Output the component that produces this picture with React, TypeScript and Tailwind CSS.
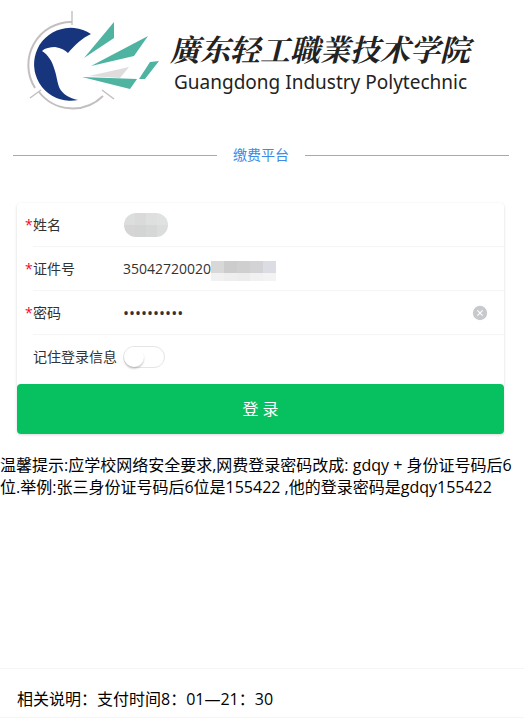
import { useState } from "react";

const cjk = "font-['Open_Sans','Noto_Sans_CJK_SC',sans-serif]";

function Emblem() {
  return (
    <svg viewBox="0 0 140 104" className="h-[104px] w-[140px] shrink-0" aria-hidden="true">
      <g fill="none" stroke="#c3bfbf" strokeWidth="2">
        <path d="M46 12A43 43 0 0 0 9 78" />
        <path d="M13 82A43 43 0 0 0 77 86" />
        <path d="M46 1V15M4 88L15 80M76 80L88 89" strokeWidth="1.4" />
      </g>
      <path
        fill="#17357d"
        d="M65 24A36.5 36.5 0 1 0 52 90C43 88 37 84 34 79C31 73 31 66 28 58C26 51 22 45 16 41C19 38 24 37 29 37C35 38 39 40 42 43C49 35 56 28 65 24Z"
      />
      <g fill="#4fb3a2">
        <path d="M58 48L88 12V28Z" />
        <path d="M65 56L122 26L108 46Z" />
        <path d="M56 67L111 69L104 79Z" />
        <path d="M113 69L124 52L133 51L119 69Z" />
      </g>
      <path fill="#dedcdd" d="M63 66L103 57L94 68Z" />
    </svg>
  );
}

function Label({ id, text, required }: { id: string; text: string; required?: boolean }) {
  return (
    <label htmlFor={id} className="flex w-[98px] shrink-0 whitespace-nowrap">
      <span className="w-2 text-[#ee0a24]">{required ? "*" : ""}</span>
      {text}
    </label>
  );
}

const row = "flex h-11 items-center pl-2";
const line = "ml-4 h-px bg-[#f5f5f5] -mt-px";
const field = "min-w-0 flex-1 bg-transparent outline-none";

export default function App() {
  const [password, setPassword] = useState("gdqy155422");
  return (
    <main className={`flex min-h-screen flex-col bg-white text-base text-black ${cjk}`}>
      <header className="flex items-start gap-1 pt-2.5 pl-[26px]">
        <Emblem />
        <div className="pt-4 whitespace-nowrap text-[#222]">
          <h1 className="font-['Noto_Serif_CJK_SC','Noto_Sans_CJK_SC',serif] text-3xl leading-[44px] font-bold italic">廣东轻工職業技术学院</h1>
          <p className="pl-1 font-['Noto_Sans',sans-serif] text-[19px] leading-6">Guangdong Industry Polytechnic</p>
        </div>
      </header>

      <div className="mt-[29px] mr-[15px] ml-[13px] flex items-center gap-4 text-sm leading-6 text-[#3c8ae6]">
        <span className="h-px flex-1 bg-[#7fb5d5]" />
        缴费平台
        <span className="h-px flex-1 bg-[#7fb5d5]" />
      </div>

      <form className="mt-9 mr-5 ml-[17px] rounded-sm text-sm text-[#323233] shadow-[0_1px_3px_#00000028]" onSubmit={(e) => e.preventDefault()}>
        <div className={`relative ${row}`}>
          <Label id="name" text="姓名" required />
          <input id="name" className={field} />
          <span className="absolute top-2.5 left-[107px] grid h-6 w-11 grid-cols-4 overflow-hidden rounded-full">
            <i className="bg-[#dcdddd]" /><i className="bg-[#dadada]" /><i className="bg-[#dedfdf]" /><i className="bg-[#dfe2e1]" />
            <i className="bg-[#d5d5d5]" /><i className="bg-[#d3d4d4]" /><i className="bg-[#d6d7d7]" /><i className="bg-[#dbdddd]" />
          </span>
        </div>
        <div className={line} />
        <div className={`relative ${row}`}>
          <Label id="card" text="证件号" required />
          <input id="card" className={field} defaultValue="35042720020" />
          <span className="absolute top-3.5 left-[194px] grid h-5 w-[65px] grid-cols-5 grid-rows-[12px_8px]">
            <i className="bg-[#d8d8d8]" /><i className="bg-[#cdcccd]" /><i className="bg-[#d0cfcf]" /><i className="bg-[#d3d3d5]" /><i className="bg-[#dcdce4]" />
            <i className="bg-[#f1f1f1]" /><i className="bg-[#eeeeee]" /><i className="bg-[#ececec]" /><i className="bg-[#f1f1f1]" /><i className="bg-[#f3f3f4]" />
          </span>
        </div>
        <div className={line} />
        <div className={row}>
          <Label id="password" text="密码" required />
          <input id="password" type="password" className={`${field} text-base`} value={password} onChange={(e) => setPassword(e.target.value)} />
          <button type="button" aria-label="清除" className="mr-4" onClick={() => setPassword("")}>
            <svg viewBox="0 0 16 16" className="size-4">
              <circle cx="8" cy="8" r="7.2" fill="#c8c9cc" />
              <path d="M5.4 5.4l5.2 5.2M10.6 5.4l-5.2 5.2" stroke="#fff" strokeWidth="1.1" />
            </svg>
          </button>
        </div>
        <div className={line} />
        <div className={row}>
          <Label id="remember" text="记住登录信息" />
          <input
            id="remember"
            type="checkbox"
            className="h-[22px] w-[42px] appearance-none rounded-full border border-[#e5e5e5] before:block before:size-5 before:rounded-full before:bg-white before:shadow-[0_2px_2px_#00000030] checked:bg-[#07c160] checked:before:ml-5"
          />
        </div>
        <button type="submit" className="mt-[5px] block h-[50px] w-full rounded-sm bg-[#07c160] text-base text-white">
          登 录
        </button>
      </form>

      <p className="mt-5 leading-[22px]">
        温馨提示:应学校网络安全要求,网费登录密码改成: gdqy + 身份证号码后6位.举例:张三身份证号码后6位是155422 ,他的登录密码是gdqy155422
      </p>

      <footer className="mt-auto border-y border-[#f5f5f5] pt-[18px] pb-1.5 pl-[17px] leading-6">相关说明：支付时间8：01—21：30</footer>
    </main>
  );
}
